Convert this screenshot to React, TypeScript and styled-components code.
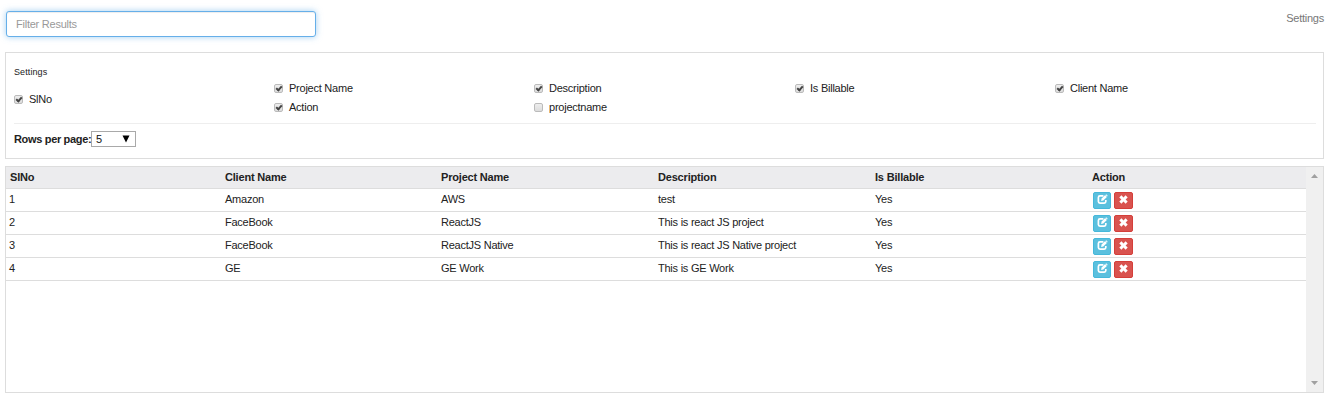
import React, { useState } from "react";
import styled, { createGlobalStyle } from "styled-components";

const GlobalStyle = createGlobalStyle`
  *, *::before, *::after { box-sizing: border-box; }
  body {
    margin: 0;
    background: #fff;
    color: #222;
    font: 11px/15px "Liberation Sans", Arial, sans-serif;
    letter-spacing: -0.24px;
  }
`;

const Page = styled.main`
  width: 1332px;
  height: 415px;
  padding: 11px 8px 0 5px;
`;

const TopBar = styled.header`
  display: flex;
  justify-content: space-between;
  align-items: flex-start;
  height: 41px;
  padding-left: 1px;
`;

const FilterInput = styled.input`
  width: 310px;
  height: 26px;
  padding: 0 9px;
  border: 1px solid #66afe9;
  border-radius: 3px;
  outline: none;
  font: inherit;
  letter-spacing: inherit;
  color: #555;
  box-shadow: inset 0 1px 1px rgba(0, 0, 0, 0.075), 0 0 6px rgba(102, 175, 233, 0.6);
  &::placeholder { color: #999; opacity: 1; }
`;

const SettingsToggle = styled.button`
  padding: 0;
  border: 0;
  background: none;
  font: inherit;
  letter-spacing: inherit;
  color: #777;
`;

const SettingsPanel = styled.section`
  width: 1319px;
  height: 107px;
  padding: 12px 7px 0 8px;
  border: 1px solid #ddd;
`;

const PanelTitle = styled.div`
  height: 14px;
  font-size: 9px;
  line-height: 14px;
  letter-spacing: 0.1px;
`;

const ColumnOptions = styled.div`
  display: grid;
  grid-template-columns: 260px 260px 261px 260px 1fr;
  grid-template-rows: 19px 19px;
  height: 45px;
  border-bottom: 1px solid #eee;
`;

const Option = styled.label<{ $tall?: boolean }>`
  display: flex;
  align-items: center;
  gap: 6px;
  grid-row: ${(p) => (p.$tall ? "1 / span 2" : "auto")};
  padding-top: ${(p) => (p.$tall ? "3px" : "0")};
`;

const CheckBox = styled.input`
  appearance: none;
  display: grid;
  place-items: center;
  width: 9px;
  height: 9px;
  margin: 0;
  border: 1px solid #bbb;
  border-radius: 2px;
  background: linear-gradient(#eee, #dcdcdc);
  &:checked::after {
    content: "";
    width: 6px;
    height: 4px;
    border: solid #444;
    border-width: 0 0 2px 2px;
    transform: translateY(-1px) rotate(-48deg);
  }
`;

const PageSize = styled.div`
  display: flex;
  align-items: center;
  padding-top: 7px;
  font-weight: bold;
  letter-spacing: -0.33px;
`;

const PageSizeLabel = styled.span`
  width: 77px;
  white-space: nowrap;
`;

const SelectBox = styled.button`
  display: flex;
  align-items: center;
  justify-content: space-between;
  width: 45px;
  height: 16px;
  padding: 0 5px 0 4px;
  border: 1px solid #a9a9a9;
  border-radius: 0;
  background: #fff;
  color: #111;
  font: 11px/14px "Liberation Sans", Arial, sans-serif;
`;

const Grid = styled.section`
  display: flex;
  width: 1319px;
  height: 227px;
  margin-top: 7px;
  border: 1px solid #ddd;
`;

const Rows = styled.div`
  flex: 1;
`;

const Row = styled.div<{ $head?: boolean }>`
  display: grid;
  grid-template-columns: ${(p) => (p.$head ? "215px" : "216px")} 216px 217px 217px 217px 1fr;
  height: ${(p) => (p.$head ? "22px" : "23px")};
  padding-left: ${(p) => (p.$head ? "4px" : "3px")};
  border-bottom: 1px solid #ddd;
  background: ${(p) => (p.$head ? "#ececee" : "#fff")};
  font-weight: ${(p) => (p.$head ? "bold" : "normal")};
  line-height: ${(p) => (p.$head ? "21px" : "20px")};
  letter-spacing: ${(p) => (p.$head ? "-0.19px" : "-0.24px")};
`;

const Actions = styled.div`
  display: flex;
  gap: 3px;
  padding: 3px 0 0 1px;
`;

const ActionButton = styled.button<{ $danger?: boolean }>`
  display: flex;
  align-items: center;
  justify-content: center;
  width: ${(p) => (p.$danger ? "19px" : "18px")};
  height: 17px;
  padding: 0 0 2px;
  border: 1px solid ${(p) => (p.$danger ? "#d43f3a" : "#46b8da")};
  border-radius: 2px;
  background: ${(p) => (p.$danger ? "#d9534f" : "#5bc0de")};
  color: #fff;
`;

const ScrollTrack = styled.div`
  display: flex;
  flex-direction: column;
  justify-content: space-between;
  align-items: center;
  width: 17px;
  padding: 7px 0;
  background: #f0f0f0;
`;

const EditIcon = () => (
  <svg width="11" height="11" viewBox="0 0 11 11" fill="none" stroke="currentColor">
    <path d="M6.4 1.9H3Q1.4 1.9 1.4 3.5V7.6Q1.4 9.2 3 9.2H7.2Q8.8 9.2 8.8 7.6V6" strokeWidth="1.7" />
    <path d="M4.1 6.9 4.6 4.6 8.1 1.1 9.9 2.9 6.3 6.4Z" fill="currentColor" stroke="none" />
    <path d="M8.6.9 9.2.3 10.7 1.8 10.1 2.4Z" fill="currentColor" stroke="none" />
  </svg>
);

const RemoveIcon = () => (
  <svg width="9" height="9" viewBox="0 0 9 9">
    <path d="M2.4.3 4.5 2.4 6.6.3 8.7 2.4 6.6 4.5 8.7 6.6 6.6 8.7 4.5 6.6 2.4 8.7.3 6.6 2.4 4.5.3 2.4Z" fill="currentColor" />
  </svg>
);

const DownIcon = () => (
  <svg width="8" height="8" viewBox="0 0 8 8">
    <path d="M.5.5H7.5L4 7.5Z" fill="#000" />
  </svg>
);

const ScrollArrow = ({ down = false }: { down?: boolean }) => (
  <svg width="7" height="4" viewBox="0 0 7 4">
    <path d={down ? "M0 0H7L3.5 4Z" : "M0 4H7L3.5 0Z"} fill="#a0a0a0" />
  </svg>
);

const options = [
  { name: "SlNo", checked: true, tall: true },
  { name: "Project Name", checked: true },
  { name: "Description", checked: true },
  { name: "Is Billable", checked: true },
  { name: "Client Name", checked: true },
  { name: "Action", checked: true },
  { name: "projectname", checked: false },
];

const headings = ["SlNo", "Client Name", "Project Name", "Description", "Is Billable", "Action"];

const projects = [
  ["1", "Amazon", "AWS", "test", "Yes"],
  ["2", "FaceBook", "ReactJS", "This is react JS project", "Yes"],
  ["3", "FaceBook", "ReactJS Native", "This is react JS Native project", "Yes"],
  ["4", "GE", "GE Work", "This is GE Work", "Yes"],
];

export default function App() {
  const [filter, setFilter] = useState("");
  return (
    <Page>
      <GlobalStyle />
      <TopBar>
        <FilterInput placeholder="Filter Results" value={filter} onChange={(e) => setFilter(e.target.value)} />
        <SettingsToggle>Settings</SettingsToggle>
      </TopBar>
      <SettingsPanel>
        <PanelTitle>Settings</PanelTitle>
        <ColumnOptions>
          {options.map((o) => (
            <Option key={o.name} $tall={o.tall}>
              <CheckBox type="checkbox" defaultChecked={o.checked} />
              {o.name}
            </Option>
          ))}
        </ColumnOptions>
        <PageSize>
          <PageSizeLabel>Rows per page:</PageSizeLabel>
          <SelectBox>
            <span>5</span>
            <DownIcon />
          </SelectBox>
        </PageSize>
      </SettingsPanel>
      <Grid>
        <Rows>
          <Row $head>
            {headings.map((h) => (
              <span key={h}>{h}</span>
            ))}
          </Row>
          {projects.map((project) => (
            <Row key={project[0]}>
              {project.map((value, i) => (
                <span key={i}>{value}</span>
              ))}
              <Actions>
                <ActionButton aria-label="Edit"><EditIcon /></ActionButton>
                <ActionButton $danger aria-label="Delete"><RemoveIcon /></ActionButton>
              </Actions>
            </Row>
          ))}
        </Rows>
        <ScrollTrack>
          <ScrollArrow />
          <ScrollArrow down />
        </ScrollTrack>
      </Grid>
    </Page>
  );
}
